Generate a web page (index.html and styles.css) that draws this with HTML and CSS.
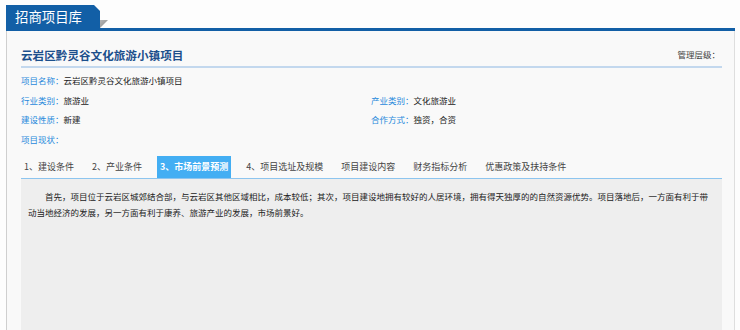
FILE: index.html
```html
<!DOCTYPE html>
<html lang="zh-CN">
<head>
    <meta charset="UTF-8">
    <meta name="viewport" content="width=device-width, initial-scale=1.0">
    <title>招商项目库</title>
<link rel="stylesheet" href="styles.css">
</head>
<body>
<div id="wrap">
    <div class="head">
        <h2 class="head-tab">招商项目库</h2>
        <span class="head-fold"></span>
    </div>
    <div class="panel">
        <div class="title-bar">
            <h3>云岩区黔灵谷文化旅游小镇项目</h3>
            <span class="level">管理层级：</span>
        </div>
        <ul class="info">
            <li class="full"><span class="lb">项目名称：</span>云岩区黔灵谷文化旅游小镇项目</li>
            <li><span class="lb">行业类别：</span>旅游业</li>
            <li><span class="lb">产业类别：</span>文化旅游业</li>
            <li><span class="lb">建设性质：</span>新建</li>
            <li><span class="lb">合作方式：</span>独资，合资</li>
            <li class="full"><span class="lb">项目现状：</span></li>
        </ul>
        <ul class="tabs">
            <li>1、建设条件</li>
            <li>2、产业条件</li>
            <li class="on">3、市场前景预测</li>
            <li>4、项目选址及规模</li>
            <li>项目建设内容</li>
            <li>财务指标分析</li>
            <li>优惠政策及扶持条件</li>
        </ul>
        <div class="tab-body">
            <p>首先，项目位于云岩区城郊结合部，与云岩区其他区域相比，成本较低；其次，项目建设地拥有较好的人居环境，拥有得天独厚的的自然资源优势。项目落地后，一方面有利于带动当地经济的发展，另一方面有利于康养、旅游产业的发展，市场前景好。</p>
        </div>
    </div>
</div>
</body>
</html>
```

FILE: styles.css
```css
* {margin: 0; padding: 0; box-sizing: border-box;}
li {list-style: none;}

body {background-color: #fdfdfd; font-family: "Noto Sans CJK SC", "Microsoft YaHei", sans-serif; color: #222;}

#wrap {width: 100%; height: 330px; padding: 0 5px 0 6px; display: flex; flex-direction: column; overflow: hidden;}

/* 상단 타이틀 탭 */
.head {display: flex; align-items: flex-end; padding-top: 5px; border-bottom: 3px solid #125fa6;}
.head-tab {width: 94px; height: 23px; line-height: 23px; padding-left: 9px; font-size: 13.4px; font-weight: normal;
    color: #fff; background-color: #125fa6; clip-path: polygon(0 0, 88px 0, 100% 6px, 100% 100%, 0 100%);}
.head-fold {width: 8px; height: 8px; background: linear-gradient(135deg, #b5b5b5, #8a8a8a);
    clip-path: polygon(0 0, 100% 0, 0 100%);}

/* 본문 패널 */
.panel {flex: 1; background-color: #f9f9f9; border-left: 1px solid #cfcfcf; border-right: 1px solid #dedede;
    padding: 0 12px 0 14px; display: flex; flex-direction: column;}

.title-bar {display: flex; justify-content: space-between; align-items: center; padding-top: 14px; padding-bottom: 1px;
    border-bottom: 2px solid #c3d8ee;}
.title-bar h3 {font-size: 11.6px; line-height: 20px; color: #1c4f8c; font-weight: bold;}
.title-bar .level {font-size: 8.5px; color: #444; padding-right: 2px; margin-top: -2px;}

.info {display: grid; grid-template-columns: 350px 1fr; margin-top: 3px; font-size: 8.5px; line-height: 19.5px; color: #222;}
.info .full {grid-column: 1 / 3;}
.info .lb {color: #2889dc;}

/* 탭 메뉴 */
.tabs {display: flex; gap: 12px; margin-top: 7px; border-bottom: 1px solid #8dc5ef;}
.tabs li {height: 22px; line-height: 22px; padding: 0 3px; font-size: 9px; color: #444; cursor: pointer;}
.tabs li.on {background-color: #43aef3; color: #fff; font-weight: bold;}

.tab-body {flex: 1; background-color: #eeeeee; padding: 9px 7px;}
.tab-body p {font-size: 8.5px; line-height: 16px; text-indent: 2em; color: #222;}
```
